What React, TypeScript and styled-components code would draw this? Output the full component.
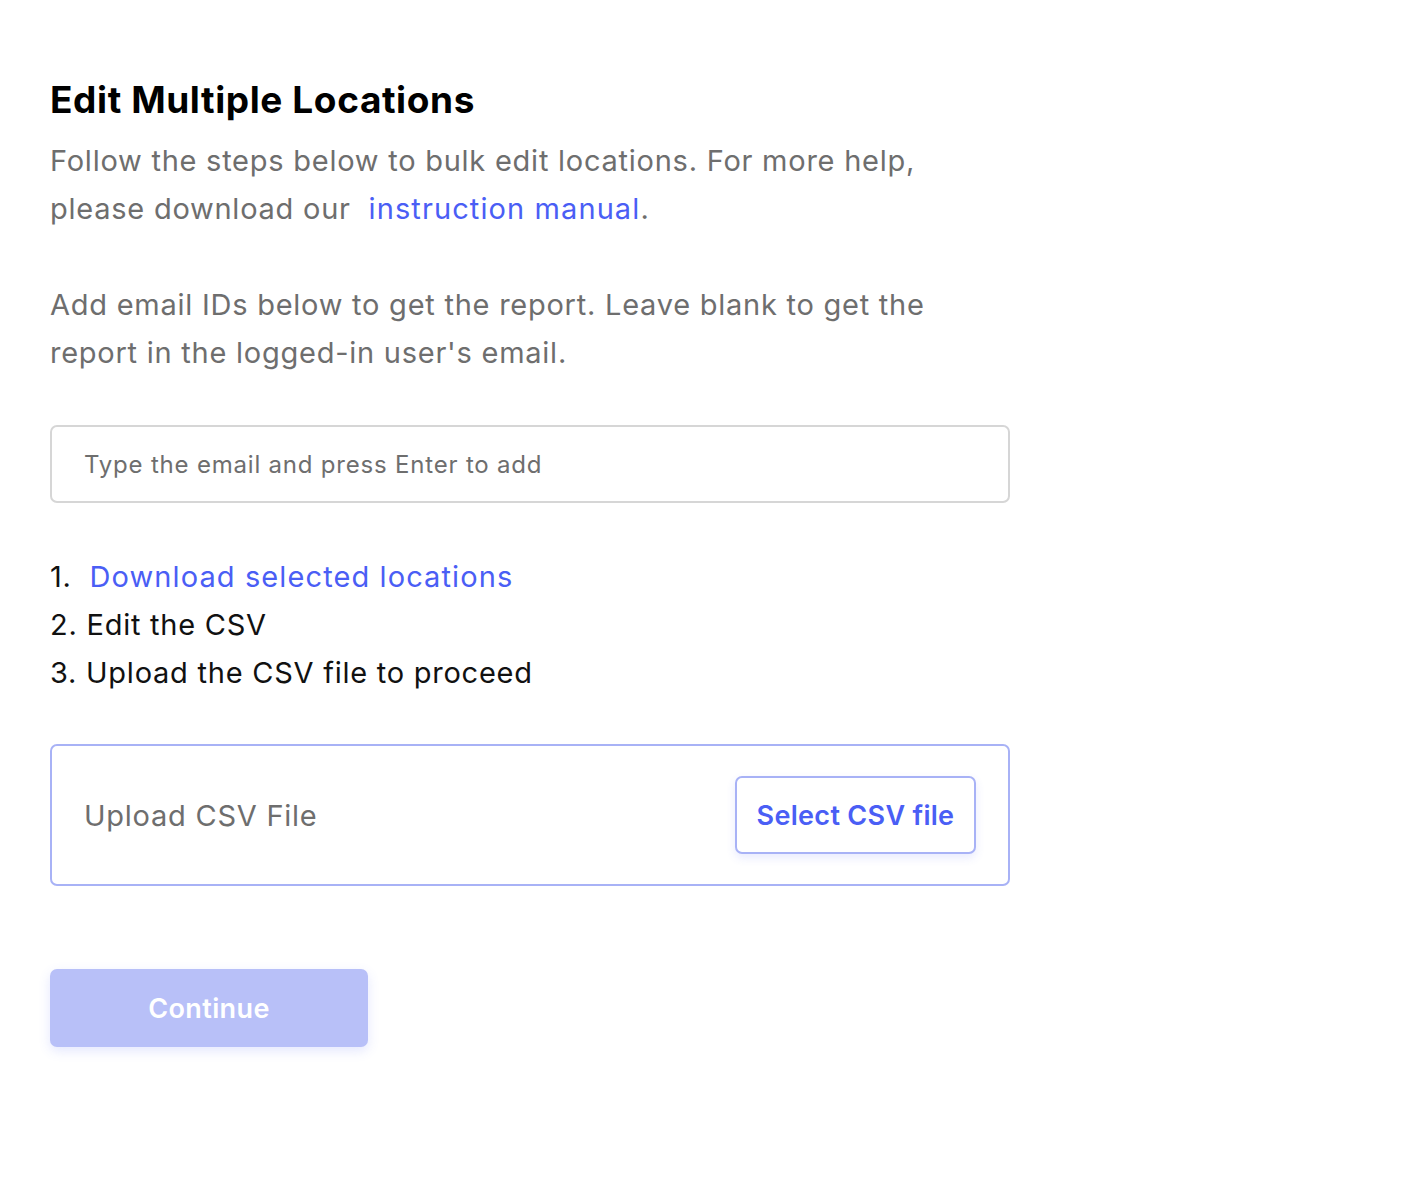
import styled, { createGlobalStyle } from 'styled-components';

const GlobalStyle = createGlobalStyle`
  body {
    margin: 0;
    background: #ffffff;
    font-family: Inter, "Noto Sans", sans-serif;
  }
`;

const Page = styled.main`
  padding: 76px 50px 120px;
  width: 960px;
`;

const Title = styled.h1`
  margin: 0 0 13px;
  font-size: 37px;
  line-height: 48px;
  font-weight: 700;
  color: #000000;
  letter-spacing: 0.6px;
`;

const Text = styled.p`
  margin: 0 0 48px;
  font-size: 29px;
  line-height: 48px;
  letter-spacing: 0.75px;
  color: #6e6e6e;
`;

const Link = styled.a`
  color: #4a5ef5;
  letter-spacing: 1.1px;
  text-decoration: none;
  cursor: pointer;
`;

const EmailInput = styled.input`
  box-sizing: border-box;
  width: 960px;
  height: 78px;
  margin-top: 0;
  padding: 0 32px;
  border: 2px solid #d6d6d6;
  border-radius: 7px;
  font-family: inherit;
  font-size: 24px;
  letter-spacing: 0.8px;
  color: #222;
  outline: none;

  &::placeholder {
    color: #6e6e6e;
  }
`;

const Steps = styled.ol`
  list-style: none;
  margin: 50px 0 0;
  padding: 0;
  font-size: 29px;
  line-height: 48px;
  letter-spacing: 0.75px;
  color: #111111;
`;

const UploadBox = styled.div`
  box-sizing: border-box;
  width: 960px;
  height: 142px;
  margin-top: 47px;
  padding: 0 32px;
  border: 2px solid #a8b2f6;
  border-radius: 7px;
  display: flex;
  align-items: center;
  justify-content: space-between;
`;

const UploadLabel = styled.span`
  font-size: 29px;
  letter-spacing: 0.75px;
  color: #6e6e6e;
`;

const SelectButton = styled.button`
  box-sizing: border-box;
  width: 241px;
  height: 78px;
  background: #ffffff;
  border: 2px solid #a8b2f6;
  border-radius: 7px;
  box-shadow: 0 4px 10px rgba(74, 94, 245, 0.12);
  font-family: inherit;
  font-size: 27px;
  letter-spacing: 0.3px;
  font-weight: 600;
  color: #4a5ef5;
  cursor: pointer;
`;

const ContinueButton = styled.button`
  display: block;
  width: 318px;
  height: 78px;
  margin-top: 83px;
  background: #b8c0f8;
  border: none;
  border-radius: 7px;
  box-shadow: 0 4px 12px rgba(74, 94, 245, 0.15);
  font-family: inherit;
  font-size: 27px;
  letter-spacing: 0.4px;
  font-weight: 600;
  color: #ffffff;
  cursor: not-allowed;
`;

export default function App() {
  return (
    <>
      <GlobalStyle />
      <Page>
        <Title>Edit Multiple Locations</Title>
        <Text>
          Follow the steps below to bulk edit locations. For more help,
          <br />
          please download our&nbsp; <Link>instruction manual</Link>.
        </Text>
        <Text>
          Add email IDs below to get the report. Leave blank to get the
          <br />
          report in the logged-in user's email.
        </Text>
        <EmailInput placeholder="Type the email and press Enter to add" />
        <Steps>
          <li>
            1.&nbsp; <Link>Download selected locations</Link>
          </li>
          <li>2. Edit the CSV</li>
          <li>3. Upload the CSV file to proceed</li>
        </Steps>
        <UploadBox>
          <UploadLabel>Upload CSV File</UploadLabel>
          <SelectButton>Select CSV file</SelectButton>
        </UploadBox>
        <ContinueButton disabled>Continue</ContinueButton>
      </Page>
    </>
  );
}
